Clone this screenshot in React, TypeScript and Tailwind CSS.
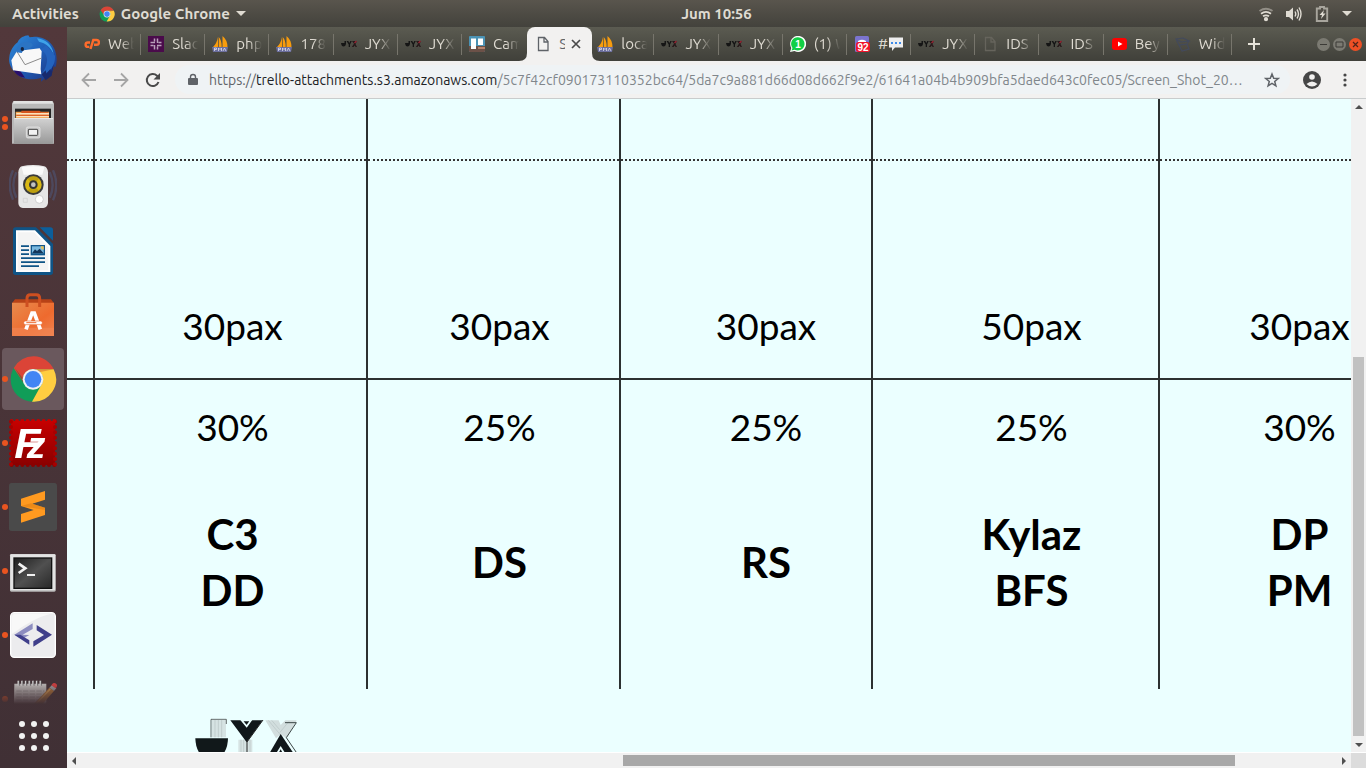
import type { ReactNode } from "react";

type IconProps = { className?: string };

/* ---------- Brand marks ---------- */

function ChromeIcon({ className }: IconProps) {
  return (
    <svg viewBox="0 0 144 144" className={className} aria-hidden="true">
      <circle cx="72" cy="73" r="67" fill="#109d58" />
      <path d="M14 39A67 67 0 0 1 134 43H72A30 30 0 0 0 44 84Z" fill="#db4437" />
      <path d="M134 43A67 67 0 0 1 69 140L98 88A30 30 0 0 0 72 43Z" fill="#ffcd41" />
      <path d="M72 43h62l-58 12Z" fill="#b93127" opacity=".35" />
      <path d="M46 88 17 38l40 52Z" fill="#06703c" opacity=".4" />
      <circle cx="72" cy="73" r="31" fill="#f1f1f1" />
      <circle cx="72" cy="73" r="25" fill="#4285f4" />
    </svg>
  );
}

function ThunderbirdIcon() {
  return (
    <svg viewBox="0 0 144 144" className="size-12" aria-hidden="true">
      <defs>
        <linearGradient id="tb" x1="0" y1="0" x2="1" y2="1">
          <stop offset="0" stopColor="#2f8ad8" />
          <stop offset=".5" stopColor="#1f5fb8" />
          <stop offset="1" stopColor="#1e2f7c" />
        </linearGradient>
      </defs>
      <path d="M26 22C32 8 46 2 58 1l4 6C84 2 110 8 126 26c18 20 20 50 14 70l-6-2c-2 16-8 26-18 32l-2-8c-4 10-10 18-18 22l1-12c-30 10-58 4-74-12C4 100-2 84 1 66c2-18 12-34 25-44Z" fill="url(#tb)" />
      <path d="M10 92c2 18 16 34 38 36L30 102Z" fill="#2a0f6b" />
      <path d="M84 10c24 2 46 18 50 48-8-20-24-34-44-38Z" fill="#3ea2e8" />
      <path d="M24 48 92 40l6 8-3 54 2 16-85-12-5-30Z" fill="#f8f8f8" />
      <path d="m24 50 24 39 50-20" fill="none" stroke="#8b8b8b" strokeWidth="3" />
      <path d="M22 52c0-20 16-34 36-30 14 2 18 10 6 16-12 5-22 6-26 16Z" fill="#2b74c4" />
      <ellipse cx="40" cy="42" rx="5" ry="6" fill="#16233f" />
      <path d="M94 44c24 10 28 40 4 74 26-4 42-30 40-56L112 30Z" fill="#2463bd" />
      <path d="m98 118 12-12 2 10 12-14 2 6 8-20-6 34-18 14Z" fill="#182a6e" />
    </svg>
  );
}

function FilesIcon() {
  return (
    <svg viewBox="0 0 144 144" className="size-12" aria-hidden="true">
      <defs>
        <linearGradient id="fl" x1="0" y1="0" x2="0" y2="1">
          <stop offset="0" stopColor="#d2d2d2" />
          <stop offset="1" stopColor="#989898" />
        </linearGradient>
      </defs>
      <path d="M13 6h118l4 8v120H9V14Z" fill="#b9b9b9" />
      <path d="M15 6h114l4 8H11Z" fill="#e2e2e2" />
      <rect x="18" y="29" width="108" height="30" fill="#252525" />
      <path d="M20 38h100v20H20Z" fill="#f0a14b" />
      <path d="M37 35h55l4 5h22v6H37Z" fill="#d5561f" />
      <path d="M22 42h98v5H22ZM22 51h98v4H22Z" fill="#fbe2bd" />
      <path d="M22 47h98v4H22Z" fill="#dd6227" />
      <rect x="15" y="57" width="118" height="78" rx="3" fill="url(#fl)" />
      <path d="M16 58h116v2H16Z" fill="#eee" />
      <rect x="52" y="84" width="41" height="33" rx="5" fill="#c9c9c9" stroke="#eee" strokeWidth="2" />
      <rect x="58" y="91" width="28" height="18" rx="2" fill="#f2f2f2" stroke="#444" strokeWidth="3" />
    </svg>
  );
}

function SpeakerIcon() {
  return (
    <svg viewBox="0 0 144 144" className="size-12" aria-hidden="true">
      <g fill="none" stroke="#4d5f8a" strokeWidth="7" opacity=".45">
        <path d="M12 22Q-8 64 12 110M22 28Q4 66 22 104M132 22q20 44 0 90M122 28q18 38 0 76" />
      </g>
      <path d="M38 10q35-8 68 0 10 4 11 18v92q-2 14-14 15H41q-12-1-13-15V28q1-14 10-18Z" fill="#e6e6e6" />
      <path d="M38 13q35-7 68 0l-6 22H44Z" fill="#fafafa" />
      <circle cx="73" cy="65" r="31" fill="#3a3a3a" />
      <circle cx="73" cy="65" r="25" fill="#d9b815" />
      <path d="M56 47a25 25 0 0 1 34 0L73 65ZM56 83a25 25 0 0 0 34 0L73 65Z" fill="#a58b0c" opacity=".55" />
      <circle cx="73" cy="65" r="13" fill="#343434" />
      <circle cx="73" cy="65" r="7" fill="#c2c2c2" />
      <circle cx="91" cy="109" r="12" fill="#fff" stroke="#cfcfcf" strokeWidth="3" />
      <path d="M43 106h12v12H43Z" fill="none" stroke="#cecece" strokeWidth="2" />
    </svg>
  );
}

function WriterIcon() {
  return (
    <svg viewBox="0 0 144 144" className="size-12" aria-hidden="true">
      <path d="M20 1h61l51 50v85q0 8-8 8H20q-8 0-8-8V9q0-8 8-8Z" fill="#0f5486" />
      <path d="M92 1h32q8 0 8 8v32Z" fill="#0c5f9b" />
      <path d="M21 10h57l46 47v78H21Z" fill="#fff" />
      <path d="M26 16h49l43 44v70H26Z" fill="#f4f4f4" />
      <path d="M36 55h24v5H36Zm0 12h24v5H36Zm0 12h24v5H36Zm0 12h72v5H36Zm0 12h72v5H36Zm0 12h54v5H36Z" fill="#0f5486" />
      <rect x="65" y="54" width="43" height="31" fill="#11568b" />
      <rect x="69" y="58" width="35" height="21" fill="#79b8df" />
      <path d="m69 79 9-12 6 5 8-7 12 14Z" fill="#14365a" />
      <path d="M95 58h9v10q-9 0-9-10Z" fill="#e7bf57" />
    </svg>
  );
}

function SoftwareIcon() {
  return (
    <svg viewBox="0 0 144 144" className="size-12" aria-hidden="true">
      <defs>
        <linearGradient id="sw" x1="0" y1="0" x2="1" y2="1">
          <stop offset="0" stopColor="#e88b4d" />
          <stop offset=".6" stopColor="#ee6a2e" />
          <stop offset="1" stopColor="#f08350" />
        </linearGradient>
      </defs>
      <path d="M18 25h108l9 12H9Z" fill="#b84216" />
      <path d="M9 35h126v100H9Z" fill="url(#sw)" />
      <path d="M9 110h126v25H9Z" fill="#f18453" opacity=".7" />
      <path d="M54 48V22q0-11 10-11h18q10 0 10 11v26" fill="none" stroke="#ce4f20" strokeWidth="9" />
      <path d="m51 115 18-49h7l18 49" fill="none" stroke="#fff" strokeWidth="11" />
      <rect x="44" y="90" width="56" height="11" rx="5" fill="#fff" stroke="#ec6a30" strokeWidth="2" />
      <path d="M52 95h30" stroke="#ec6a30" strokeWidth="3" />
    </svg>
  );
}

const STAMP_NOTCHES = [8, 24, 40, 56, 72, 88, 104, 120, 136];

function FileZillaIcon() {
  return (
    <svg viewBox="0 0 144 144" className="size-12" aria-hidden="true">
      <defs>
        <linearGradient id="fz" x1="0" y1="0" x2="0" y2="1">
          <stop offset="0" stopColor="#c60000" />
          <stop offset="1" stopColor="#8b0000" />
        </linearGradient>
      </defs>
      <rect x="6" y="6" width="132" height="132" fill="url(#fz)" />
      {STAMP_NOTCHES.map((n) => (
        <g key={n}>
          <circle cx={n} cy="6" r="6" fill="#c60000" />
          <circle cx={n} cy="138" r="6" fill="#8b0000" />
          <circle cx="6" cy={n} r="6" fill="#a80000" />
          <circle cx="138" cy={n} r="6" fill="#a80000" />
        </g>
      ))}
      <text x="16" y="118" fontFamily="Liberation Sans, sans-serif" fontSize="130" fontWeight="700" fontStyle="italic" fill="#fff">
        F<tspan dx="-42" fontSize="112">z</tspan>
      </text>
    </svg>
  );
}

function SublimeIcon() {
  return (
    <svg viewBox="0 0 144 144" className="size-12" aria-hidden="true">
      <rect width="144" height="144" rx="8" fill="#4a4a4a" />
      <path d="m36 47 72-23v26L70 62l38 12v22l-72 23V93l38-12-38-12Z" fill="#ff9a20" />
      <path d="m36 69 72 12V74L66 61Z" fill="#d97a10" opacity=".5" />
    </svg>
  );
}

function TerminalIcon() {
  return (
    <svg viewBox="0 0 144 144" className="size-12" aria-hidden="true">
      <defs>
        <linearGradient id="tm" x1="0" y1="0" x2="1" y2="1">
          <stop offset="0" stopColor="#202020" />
          <stop offset=".5" stopColor="#505050" />
          <stop offset="1" stopColor="#2a2a2a" />
        </linearGradient>
      </defs>
      <rect x="3" y="21" width="137" height="113" rx="4" fill="#b8b8b8" />
      <rect x="4" y="22" width="135" height="108" rx="3" fill="#e3e3e3" />
      <rect x="13" y="31" width="117" height="95" fill="#111" />
      <rect x="17" y="35" width="109" height="87" fill="url(#tm)" />
      <path d="m29 50 20 14-20 14" fill="none" stroke="#f1f1f1" strokeWidth="8" />
      <path d="M54 84h24" stroke="#f1f1f1" strokeWidth="6" />
    </svg>
  );
}

function BracketsIcon() {
  return (
    <svg viewBox="0 0 144 144" className="size-12" aria-hidden="true">
      <rect x="5" y="5" width="134" height="134" rx="11" fill="#ececee" stroke="#fff" strokeWidth="4" />
      <path d="M8 70V20Q8 8 20 8h104Q70 22 8 70Z" fill="#f8f8f8" />
      <path d="m71 37-55 34 22 14 23-13-20-1 30-17Z" fill="#8d8dc0" />
      <path d="m34 71 27 17v13L16 71Z" fill="#403f8b" />
      <path d="m83 42 46 29-56 36V91l32-19-22-14Z" fill="#403f8b" />
    </svg>
  );
}

function NotesIcon() {
  return (
    <svg viewBox="0 0 144 144" className="size-12" aria-hidden="true">
      <path d="M16 26h96v90H14Z" fill="#c9c7c5" />
      <path d="M22 48h84M22 57h84M22 66h84M22 75h80" stroke="#8f8c8b" strokeWidth="2" strokeDasharray="16 4" />
      <path d="M28 17v15m11-15v15m11-15v15m11-15v15m11-15v15m11-15v15m11-15v15" stroke="#ddd" strokeWidth="5" />
      <path d="M31 18v14m11-14v14m11-14v14m11-14v14m11-14v14m11-14v14m11-14v14" stroke="#444" strokeWidth="2" />
      <path d="m74 88 47-50 14 10-42 48Z" fill="#b97936" />
      <path d="m80 88 44-46" stroke="#e2a555" strokeWidth="4" />
      <path d="m121 38 8-8 13 10-7 8Z" fill="#a5a5a5" />
      <path d="m127 31 5-6q7-3 12 4 1 6-4 11Z" fill="#e04141" />
    </svg>
  );
}

/* ---------- Tab favicons ---------- */

function CPanelFav() {
  return (
    <svg viewBox="0 0 16 16" className="size-4 shrink-0" aria-hidden="true">
      <g fill="none" stroke="#ff6c2c" strokeWidth="2.4">
        <path d="M6 6.500H3.800a2.200 2.200 0 0 0 0 4.400h1.500M6.500 13 9.300 4h3.200a2.200 2.200 0 0 1 0 4.800H10" />
      </g>
    </svg>
  );
}

function SlackFav() {
  return (
    <svg viewBox="0 0 16 16" className="size-4 shrink-0" aria-hidden="true">
      <rect width="16" height="16" fill="#4a0b4b" />
      <path d="M6.500 5.500v-3M2.500 6.500H7M9.500 2.500V7M10.500 6.500h3M2.500 9.500h3M6.500 9v4.500M9.500 10.500v3M9 9.500h4.500" stroke="#b9a0bb" strokeWidth="1.500" />
    </svg>
  );
}

function SailFav() {
  return (
    <svg viewBox="0 0 16 16" className="size-4 shrink-0" aria-hidden="true">
      <path d="M6 1v10H1Q5 7 6 1ZM6.700 1q3 3 3 10h-3ZM10.500 0q5 4 5 11h-5Z" fill="#f89c0e" />
      <path d="M0 11h16l-1 5H1Z" fill="#6c6f9e" />
      <path d="M2.500 15v-3h2v1.500h-2M6.500 15v-3L8 13.500 9.500 12v3M11 15l1.500-3 1.500 3" fill="none" stroke="#dcdcec" strokeWidth=".8" />
    </svg>
  );
}

function JyxFav() {
  return (
    <svg viewBox="0 0 16 16" className="size-4 shrink-0" aria-hidden="true">
      <path d="M0 8h5V5H3.500v2H0q.5 3.500 2.500 3.500T5 8Z" fill="#151515" />
      <path d="M5.500 5h1.800l1 2 1-2h1.500L9 8.500V11H7.700V8.500Z" fill="#151515" />
      <path d="m11 5 2 2.800L10.800 11h1.800l1-1.500 1 1.500H16l-1.500-3L16 5" fill="#26191a" />
      <path d="M13.500 7 15.500 5" stroke="#9c2634" strokeWidth="1.300" />
    </svg>
  );
}

function TrelloFav() {
  return (
    <svg viewBox="0 0 16 16" className="size-4 shrink-0" aria-hidden="true">
      <rect width="16" height="16" rx="1" fill="#4b93b5" />
      <path d="M0 10h16v5q0 1-1 1H1q-1 0-1-1Z" fill="#6c5148" />
      <path d="M9 11h7v2H9Z" fill="#b5836c" />
      <path d="M2 2.500h5V13H2ZM9 2.500h5V9H9Z" fill="#fff" />
    </svg>
  );
}

function PageFav({ stroke = "#5f6368" }: { stroke?: string }) {
  return (
    <svg viewBox="0 0 16 16" className="size-4 shrink-0" aria-hidden="true">
      <path d="M3.500 1.500h6l3.500 4v9H3.500ZM9 2v4h4" fill="none" stroke={stroke} strokeWidth="1.300" />
    </svg>
  );
}

function WhatsAppFav() {
  return (
    <svg viewBox="0 0 16 16" className="size-4 shrink-0" aria-hidden="true">
      <path d="M0 16 1.300 12A8 8 0 1 1 4.500 15Z" fill="#fff" />
      <path d="M1.500 14.500 2.500 12A6.700 6.700 0 1 1 4.600 13.800Z" fill="#12cf45" />
      <text x="8" y="11.500" textAnchor="middle" fontFamily="Liberation Sans, sans-serif" fontSize="10" fontWeight="700" fill="#fff">1</text>
    </svg>
  );
}

function BadgeFav() {
  return (
    <svg viewBox="0 0 16 16" className="size-4 shrink-0" aria-hidden="true">
      <rect x="1" width="14" height="16" rx="1.500" fill="#7b74cf" />
      <path d="M4 5q4-2.500 8 0v3H4Z" fill="#fff" />
      <rect x="2" y="6" width="14" height="10" rx="2.500" fill="#f1132a" />
      <text x="9" y="14.500" textAnchor="middle" fontFamily="Liberation Sans, sans-serif" fontSize="10" fontWeight="700" fill="#fff">92</text>
    </svg>
  );
}

function YouTubeFav() {
  return (
    <svg viewBox="0 0 16 16" className="size-4 shrink-0" aria-hidden="true">
      <rect x="1" y="2" width="15" height="12" rx="3" fill="#f00" />
      <path d="m7 5.500 4.500 2.500L7 10.500Z" fill="#fff" />
    </svg>
  );
}

function SketchFav() {
  return (
    <svg viewBox="0 0 16 16" className="size-4 shrink-0" aria-hidden="true">
      <path d="m1 3 7-1 6 3-8 1ZM1 3l3 6 8-1 2-3M4 9l3 6 7-2-2-5" fill="none" stroke="#434a5c" strokeWidth="1.200" />
    </svg>
  );
}

function SpeechBubble() {
  return (
    <svg viewBox="0 0 16 16" className="size-4 shrink-0" aria-hidden="true">
      <path d="M1 1.500h14v10H7L4 15v-3.500H1Z" fill="#eeeeee" />
      <path d="M3 6h2v2H3Zm4 0h2v2H7Zm4 0h2v2h-2Z" fill="#3e8ae8" />
    </svg>
  );
}

/* ---------- Desktop top bar ---------- */

function TopBar() {
  return (
    <header className="grid h-[27px] shrink-0 grid-cols-[1fr_auto_1fr] items-center bg-linear-to-b from-[#59554d] to-[#43423c] text-[15px] leading-5 font-bold text-[#dfdbd2]">
      <div className="flex items-center gap-5 pl-3">
        <button type="button">Activities</button>
        <button type="button" className="flex items-center gap-[6px]">
          <ChromeIcon className="size-4" />
          Google Chrome
          <svg viewBox="0 0 10 6" className="h-[6px] w-[10px]" aria-hidden="true"><path d="M0 0h10L5 5Z" fill="#dfdbd2" /></svg>
        </button>
      </div>
      <button type="button" className="ml-[67px]">Jum 10:56</button>
      <button type="button" aria-label="System menu" className="flex items-center gap-3 justify-self-end pr-[14px]">
        <svg viewBox="0 0 16 16" className="size-4" fill="none" stroke="#dfdbd2" strokeWidth="1.800" aria-hidden="true">
          <path d="M1.500 5Q8 .5 14.500 5" opacity=".45" />
          <path d="M3 7.700q5-3.500 10 0M5 10.300q3-2 6 0" />
          <circle cx="8" cy="13.200" r="1.200" fill="#dfdbd2" />
        </svg>
        <svg viewBox="0 0 16 16" className="size-4" aria-hidden="true">
          <path d="M0 5h3l4-3.500v13L3 11H0Z" fill="#dfdbd2" />
          <path d="M9 5.500q1.500 2.500 0 5M11 3.500q3 4.500 0 9M13 1.500q4 6.500 0 13" fill="none" stroke="#dfdbd2" strokeWidth="1.400" />
        </svg>
        <svg viewBox="0 0 16 16" className="size-4" aria-hidden="true">
          <path d="M6 1h4v1.500h3.200v12.500H2.800V2.500H6Z" fill="none" stroke="#a8a59d" strokeWidth="1.900" />
          <path d="M10 4 5.500 9H8l-1 4 4.500-5.500H9Z" fill="#dfdbd2" />
        </svg>
        <svg viewBox="0 0 10 6" className="h-[6px] w-[10px]" aria-hidden="true"><path d="M0 0h10L5 5Z" fill="#dfdbd2" /></svg>
      </button>
    </header>
  );
}

/* ---------- Dock ---------- */

type DockEntry = { name: string; icon: ReactNode; windows: number; active?: boolean };

const DOCK: DockEntry[] = [
  { name: "Thunderbird Mail", icon: <ThunderbirdIcon />, windows: 0 },
  { name: "Files", icon: <FilesIcon />, windows: 2 },
  { name: "Rhythmbox", icon: <SpeakerIcon />, windows: 0 },
  { name: "LibreOffice Writer", icon: <WriterIcon />, windows: 0 },
  { name: "Ubuntu Software", icon: <SoftwareIcon />, windows: 0 },
  { name: "Google Chrome", icon: <ChromeIcon className="size-12" />, windows: 1, active: true },
  { name: "FileZilla", icon: <FileZillaIcon />, windows: 1 },
  { name: "Sublime Text", icon: <SublimeIcon />, windows: 1 },
  { name: "Terminal", icon: <TerminalIcon />, windows: 1 },
  { name: "Code editor", icon: <BracketsIcon />, windows: 1 },
  { name: "Notes", icon: <NotesIcon />, windows: 1 },
];

function Dock() {
  return (
    <nav aria-label="Dock" className="flex w-[67px] shrink-0 flex-col bg-linear-to-b from-[#52383b] to-[#403035]">
      <div className="min-h-0 flex-1 overflow-hidden mask-b-from-[calc(100%-24px)] mask-b-to-100%">
        {DOCK.map((item) => (
          <button
            key={item.name}
            type="button"
            aria-label={item.name}
            className="flex h-16 w-full items-center p-px"
          >
            <span className={`ml-px flex h-[62px] w-[62px] items-center rounded ${item.active ? "bg-[#6a585d]" : ""}`}>
              <span className="flex w-[7px] flex-col items-start gap-[2px]">
                {Array.from({ length: item.windows }, (_, i) => (
                  <i key={i} className="size-[6px] rounded-full bg-[#e95420]" />
                ))}
              </span>
              {item.icon}
            </span>
          </button>
        ))}
      </div>
      <button type="button" aria-label="Show Applications" className="flex h-16 shrink-0 items-center justify-center">
        <svg viewBox="0 0 30 30" className="size-[30px]" fill="#f2f2f2" aria-hidden="true">
          {[3, 15, 27].map((y) => [3, 15, 27].map((x) => <circle key={`${x}-${y}`} cx={x} cy={y} r="3" />))}
        </svg>
      </button>
    </nav>
  );
}

/* ---------- Browser ---------- */

type TabEntry = { title: string; icon: ReactNode; active?: boolean; extra?: ReactNode };

const TABS: TabEntry[] = [
  { title: "Web", icon: <CPanelFav /> },
  { title: "Slack", icon: <SlackFav /> },
  { title: "php", icon: <SailFav /> },
  { title: "178.", icon: <SailFav /> },
  { title: "JYX", icon: <JyxFav /> },
  { title: "JYX", icon: <JyxFav /> },
  { title: "Cam", icon: <TrelloFav /> },
  { title: "S", icon: <PageFav />, active: true },
  { title: "loca", icon: <SailFav /> },
  { title: "JYX", icon: <JyxFav /> },
  { title: "JYX", icon: <JyxFav /> },
  { title: "(1) W", icon: <WhatsAppFav /> },
  { title: "#", icon: <BadgeFav />, extra: <SpeechBubble /> },
  { title: "JYX", icon: <JyxFav /> },
  { title: "IDS", icon: <PageFav stroke="#66645c" /> },
  { title: "IDS", icon: <JyxFav /> },
  { title: "Bey", icon: <YouTubeFav /> },
  { title: "Wid", icon: <SketchFav /> },
];

function Tab({ tab, divider }: { tab: TabEntry; divider: boolean }) {
  if (tab.active) {
    return (
      <div className="relative -mr-[2px] ml-px flex h-[34px] min-w-0 items-center rounded-t-lg bg-[#f2f1f0] pl-2">
        <svg viewBox="0 0 8 8" className="absolute bottom-0 -left-2 size-2" aria-hidden="true"><path d="M8 0v8H0q8 0 8-8Z" fill="#f2f1f0" /></svg>
        <svg viewBox="0 0 8 8" className="absolute -right-2 bottom-0 size-2" aria-hidden="true"><path d="M0 0v8h8Q0 8 0 0Z" fill="#f2f1f0" /></svg>
        {tab.icon}
        <button type="button" role="tab" aria-selected="true" className="ml-2 w-[6px] overflow-hidden text-left text-[#5f6368]">
          {tab.title}
        </button>
        <button type="button" aria-label="Close tab" className="ml-[6px]">
          <svg viewBox="0 0 10 10" className="size-[10px]" aria-hidden="true"><path d="m1 1 8 8M9 1 1 9" stroke="#4a4a4a" strokeWidth="1.700" /></svg>
        </button>
      </div>
    );
  }
  return (
    <button
      type="button"
      role="tab"
      aria-selected="false"
      className={`flex h-[21px] min-w-0 items-center gap-2 border-r pl-[7px] text-[#dfdbd2] ${divider ? "border-[#77756c]" : "border-transparent"}`}
    >
      {tab.icon}
      <span className={`flex w-[26px] items-center overflow-hidden whitespace-nowrap ${tab.extra ? "" : "mask-r-from-50% mask-r-to-100%"}`}>
        {tab.title}
        {tab.extra}
      </span>
    </button>
  );
}

function TabStrip() {
  return (
    <div className="flex h-[34px] shrink-0 items-center bg-linear-to-b from-[#5b5b51] to-[#40403a] pl-[10px] text-[15px] leading-5">
      <div role="tablist" aria-label="Tabs" className="grid h-full min-w-0 flex-1 auto-cols-[minmax(0,1fr)] grid-flow-col items-center">
        {TABS.map((tab, i) => (
          <Tab key={i} tab={tab} divider={!TABS[i + 1]?.active} />
        ))}
      </div>
      <div className="flex w-[134px] shrink-0 items-center pl-4">
        <button type="button" aria-label="New tab">
          <svg viewBox="0 0 12 12" className="size-3" aria-hidden="true"><path d="M6 0v12M0 6h12" stroke="#e6e2d9" strokeWidth="2" /></svg>
        </button>
        <div className="ml-auto flex gap-[3px] pr-1">
          <button type="button" aria-label="Minimize">
            <svg viewBox="0 0 13 13" className="size-[13px]" aria-hidden="true"><circle cx="6.500" cy="6.500" r="6.500" fill="#7b7a72" /><path d="M3 6.500h7" stroke="#3c3b37" /></svg>
          </button>
          <button type="button" aria-label="Maximize">
            <svg viewBox="0 0 13 13" className="size-[13px]" aria-hidden="true"><circle cx="6.500" cy="6.500" r="6.500" fill="#7b7a72" /><path d="M3 4h7v5H3Z" fill="none" stroke="#3c3b37" /></svg>
          </button>
          <button type="button" aria-label="Close window">
            <svg viewBox="0 0 13 13" className="size-[13px]" aria-hidden="true"><circle cx="6.500" cy="6.500" r="6.500" fill="#ee5025" /><path d="m4 4 5 5M9 4 4 9" stroke="#50241a" strokeWidth="1.200" /></svg>
          </button>
        </div>
      </div>
    </div>
  );
}

function Toolbar() {
  return (
    <div className="flex h-[38px] shrink-0 items-center border-b border-[#c9cccd] bg-[#f2f1f0] pr-[13px] pl-[14px]">
      <div className="flex items-center gap-4">
        <button type="button" aria-label="Back">
          <svg viewBox="0 0 16 16" className="size-4" fill="none" stroke="#a5a5a5" strokeWidth="1.800" aria-hidden="true"><path d="M15 8H2M8 1.500 1.500 8 8 14.500" /></svg>
        </button>
        <button type="button" aria-label="Forward">
          <svg viewBox="0 0 16 16" className="size-4" fill="none" stroke="#a5a5a5" strokeWidth="1.800" aria-hidden="true"><path d="M1 8h13M8 1.500 14.500 8 8 14.500" /></svg>
        </button>
        <button type="button" aria-label="Reload">
          <svg viewBox="0 0 16 16" className="size-4" aria-hidden="true">
            <path d="M13.500 10A6 6 0 1 1 12 3.700L14 6" fill="none" stroke="#4a4a4a" strokeWidth="2" />
            <path d="M15 1v6.500H8.500Z" fill="#4a4a4a" />
          </svg>
        </button>
      </div>
      <div className="ml-[14px] flex h-[29px] min-w-0 flex-1 items-center rounded-full bg-[#eff3f5] pr-[10px] pl-3">
        <svg viewBox="0 0 12 14" className="h-[14px] w-3 shrink-0" aria-hidden="true">
          <path d="M2 5h8q1 0 1 1v5q0 1-1 1H2q-1 0-1-1V6q0-1 1-1Z" fill="#5f6368" />
          <path d="M3.500 5.500V4a2.500 2.500 0 0 1 5 0v1.500" fill="none" stroke="#5f6368" strokeWidth="1.400" />
        </svg>
        <div role="textbox" tabIndex={0} aria-label="Address and search bar" className="ml-[10px] min-w-0 flex-1 truncate text-sm text-[#80868b]">
          <span className="text-[#5f6368]">https://</span>
          <span className="text-[#202124]">trello-attachments.s3.amazonaws.com</span>
          /5c7f42cf090173110352bc64/5da7c9a881d66d08d662f9e2/61641a04b4b909bfa5daed643c0fec05/Screen_Shot_20…
        </div>
        <button type="button" aria-label="Bookmark this page" className="ml-3">
          <svg viewBox="0 0 16 16" className="size-4" aria-hidden="true"><path d="m8 2 1.700 4.200 4.500.3-3.500 2.900 1.200 4.400L8 11.400l-3.900 2.400 1.200-4.400-3.500-2.900 4.500-.3Z" fill="none" stroke="#5f6368" strokeWidth="1.500" /></svg>
        </button>
      </div>
      <button type="button" aria-label="Profile" className="ml-[13px]">
        <svg viewBox="0 0 18 18" className="size-[18px]" aria-hidden="true">
          <circle cx="9" cy="9" r="9" fill="#464646" />
          <circle cx="9" cy="6" r="2.800" fill="#f2f1f0" />
          <path d="M3.500 13q5.500-5 11 0-5.500 5-11 0Z" fill="#f2f1f0" />
        </svg>
      </button>
      <button type="button" aria-label="Menu" className="ml-4">
        <svg viewBox="0 0 16 16" className="size-4" fill="#464646" aria-hidden="true"><circle cx="8" cy="3" r="1.600" /><circle cx="8" cy="8" r="1.600" /><circle cx="8" cy="13" r="1.600" /></svg>
      </button>
    </div>
  );
}

/* ---------- Seating plan page ---------- */

type PlanColumn = { pax: string; share: string; names: string[]; cell: string };

const COLUMNS: PlanColumn[] = [
  { pax: "30pax", share: "30%", names: ["C3", "DD"], cell: "w-[273px] pl-1" },
  { pax: "30pax", share: "25%", names: ["DS"], cell: "w-[253px] pl-3" },
  { pax: "30pax", share: "25%", names: ["RS"], cell: "w-[252px] pl-10" },
  { pax: "50pax", share: "25%", names: ["Kylaz", "BFS"], cell: "w-[287px] pl-8" },
  { pax: "30pax", share: "30%", names: ["DP", "PM"], cell: "w-[280px]" },
];

function JyxLogo() {
  return (
    <svg viewBox="0 0 306 180" className="ml-[128px] h-[60px] w-[102px] shrink-0" aria-label="JYX" role="img">
      <path d="M51 6h42v52H51ZM130 65h42v100h-42Z" fill="#d6e3e3" />
      <path d="M60 6v52M70 6v52M80 6v52M138 65v100M146 65v100M165 65v100" stroke="#c1cdcd" strokeWidth="3" />
      <path d="M48 58V4h46v14" fill="none" stroke="#222" strokeWidth="2" />
      <path d="M1 61h98q-2 60-49 60T1 61Z" fill="#11181a" />
      <path d="M106 7h35l14 20 14-20h34l-48 66Z" fill="#10171a" />
      <path d="M140 7h28l-13 18Z" fill="#11181a" stroke="#ebffff" strokeWidth="5" />
      <path d="m204 6-48 66v100" fill="none" stroke="#222" strokeWidth="3" />
      <path d="M211 7h40l6 14 14-14h34l-30 54-18-12-14 12Z" fill="#d2dede" />
      <path d="m220 7 40 48M230 7l24 28M282 10l-28 34" stroke="#b7c4c4" strokeWidth="2" />
      <path d="M270 14h34l-30 45 34 50" fill="none" stroke="#3b4646" strokeWidth="3" />
      <path d="m257 48 48 72h-90Z" fill="#10171a" />
      <path d="m257 84-20 32h40Z" fill="#ebffff" />
      <path d="m257 94-12 22h24Z" fill="#11181a" />
    </svg>
  );
}

function Plan() {
  return (
    <main className="min-h-0 min-w-0 overflow-hidden bg-[#ebffff] text-black">
      <div className="flex w-max flex-col font-['Lato','Liberation_Sans',sans-serif]">
        <table className="table-fixed border-collapse text-center">
          <tbody>
            <tr className="h-[61px]">
              <td className="w-[27px] border-b-2 border-b-[#333] [border-bottom-style:dotted]" />
              {COLUMNS.map((c, i) => (
                <td key={i} className={`border-b-2 border-l-2 border-b-[#333] border-l-[#2c3131] [border-bottom-style:dotted] ${c.cell}`} />
              ))}
            </tr>
            <tr className="h-[219px]">
              <td className="border-b-2 border-[#2c3131]" />
              {COLUMNS.map((c, i) => (
                <td key={i} className={`border-b-2 border-l-2 border-[#2c3131] pb-[29px] align-bottom text-[37px] leading-[46px] ${c.cell}`}>{c.pax}</td>
              ))}
            </tr>
            <tr className="h-[310px]">
              <td />
              {COLUMNS.map((c, i) => (
                <td key={i} className={`border-l-2 border-[#2c3131] pt-6 align-top ${c.cell}`}>
                  <div className="text-[37px] leading-[46px]">{c.share}</div>
                  <div className="mt-14 flex h-[112px] flex-col justify-center text-[42px] leading-[56px] font-bold">
                    {c.names.map((n) => (
                      <div key={n}>{n}</div>
                    ))}
                  </div>
                </td>
              ))}
            </tr>
          </tbody>
        </table>
        <div className="pt-[29px]">
          <JyxLogo />
        </div>
      </div>
    </main>
  );
}

function VerticalScrollbar() {
  return (
    <div aria-hidden="true" className="flex flex-col items-center bg-[#f1f1f1]">
      <svg viewBox="0 0 15 16" className="h-4 w-[15px] shrink-0"><path d="m4 10 4-4 4 4Z" fill="#505050" /></svg>
      <div className="grid w-[11px] flex-1 grid-rows-[242fr_380fr]">
        <span />
        <span className="bg-[#c1c1c1]" />
      </div>
      <svg viewBox="0 0 15 16" className="h-4 w-[15px] shrink-0"><path d="m4 7 4 4 4-4Z" fill="#505050" /></svg>
    </div>
  );
}

function HorizontalScrollbar() {
  return (
    <div aria-hidden="true" className="flex items-center border-t border-white bg-[#f1f1f1]">
      <svg viewBox="0 0 16 15" className="h-[15px] w-4 shrink-0"><path d="M9 4 5 8l4 4Z" fill="#505050" /></svg>
      <div className="grid h-[11px] flex-1 grid-cols-[540fr_612fr_100fr]">
        <span />
        <span className="bg-[#a8a8a8]" />
      </div>
      <svg viewBox="0 0 16 15" className="h-[15px] w-4 shrink-0"><path d="m7 4 4 4-4 4Z" fill="#505050" /></svg>
    </div>
  );
}

export default function App() {
  return (
    <div className="flex h-screen flex-col overflow-hidden font-['Ubuntu','Noto_Sans',sans-serif]">
      <TopBar />
      <div className="flex min-h-0 flex-1">
        <Dock />
        <div className="flex min-w-0 flex-1 flex-col">
          <TabStrip />
          <Toolbar />
          <div className="grid min-h-0 flex-1 grid-cols-[minmax(0,1fr)_15px] grid-rows-[minmax(0,1fr)_16px]">
            <Plan />
            <VerticalScrollbar />
            <HorizontalScrollbar />
            <div className="border-t border-white bg-[#dcdcdc]" />
          </div>
        </div>
      </div>
    </div>
  );
}
